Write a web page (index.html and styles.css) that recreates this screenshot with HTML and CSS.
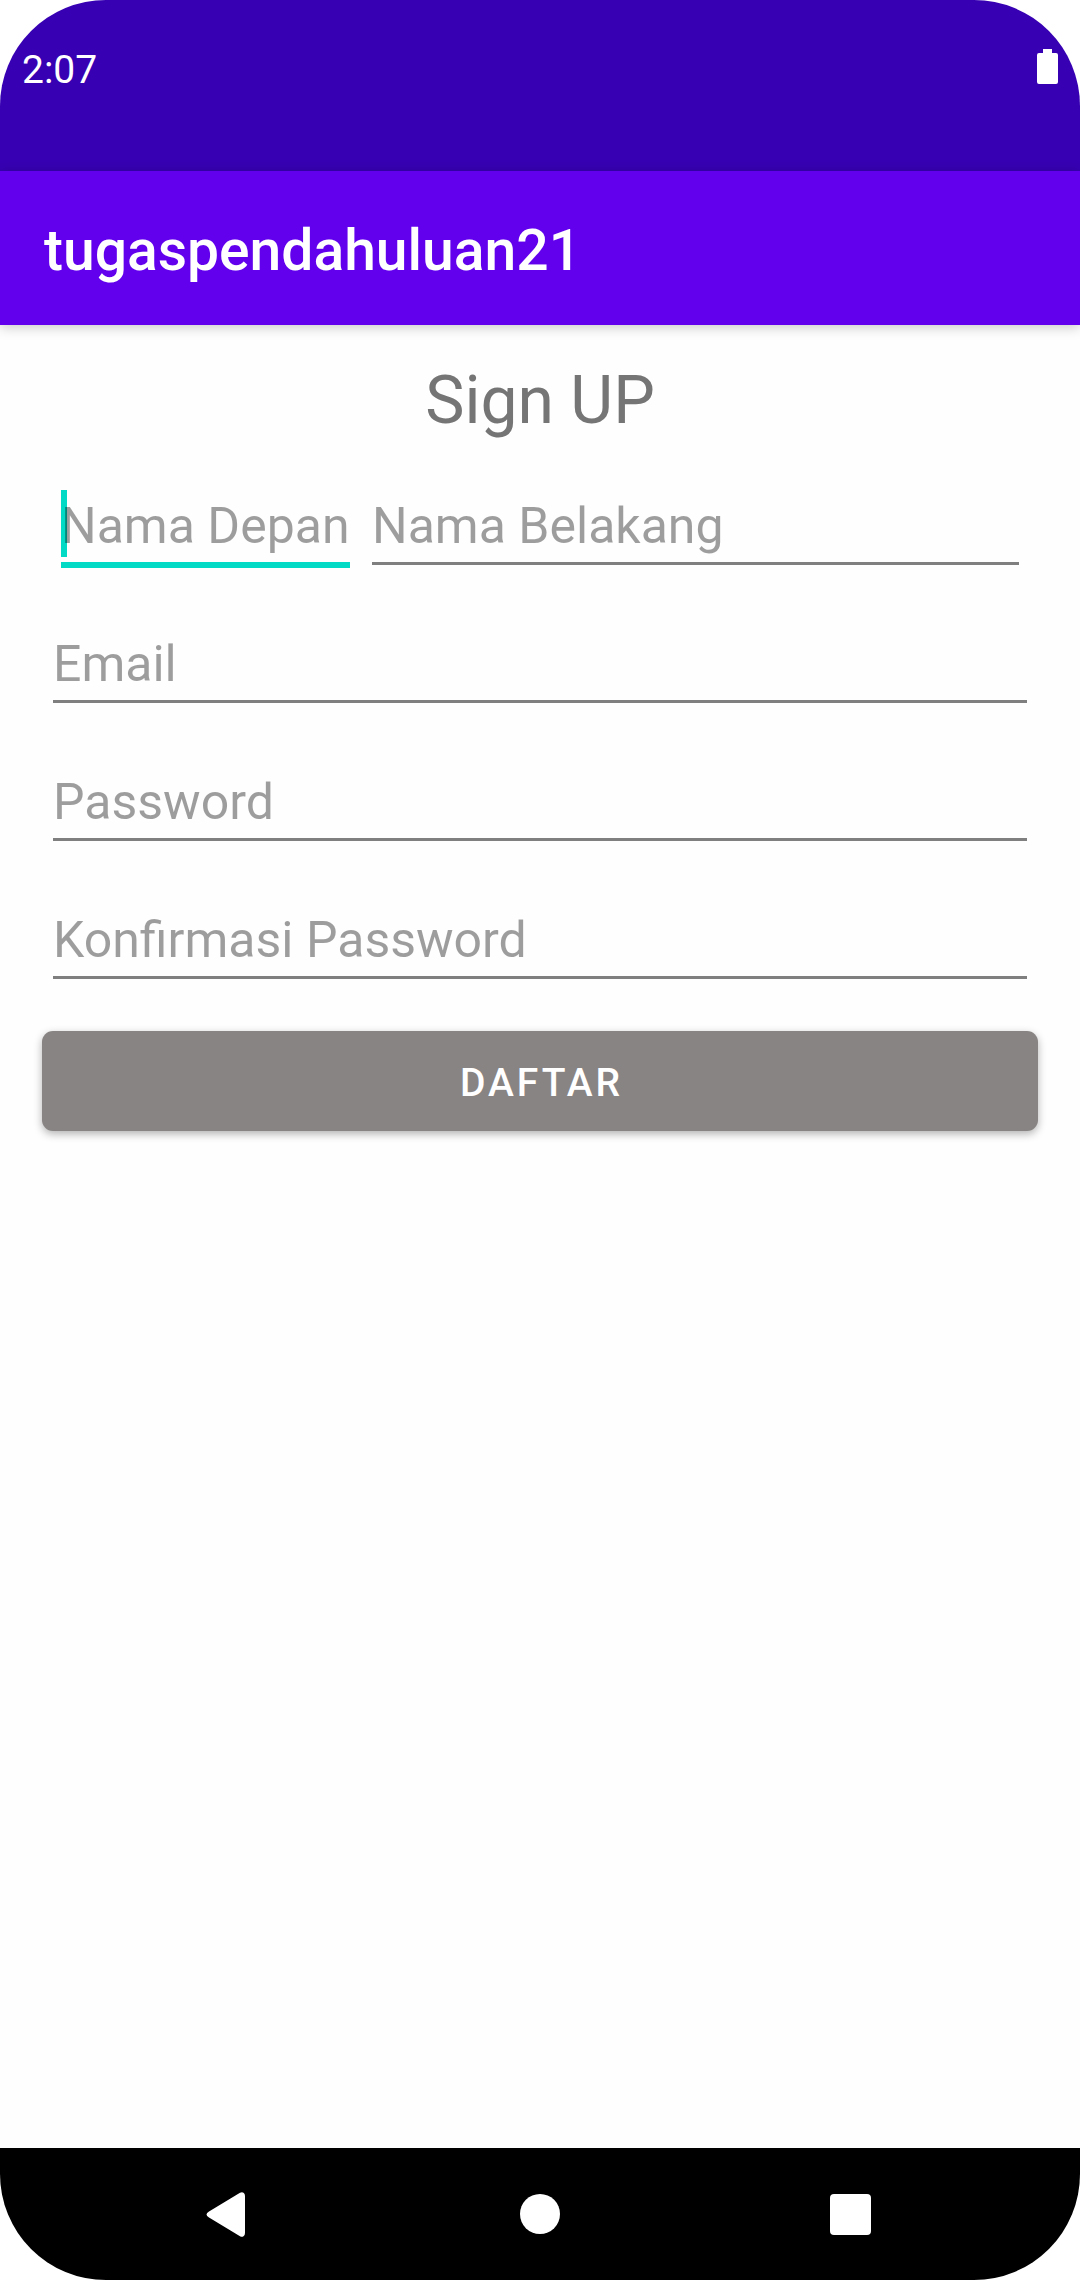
FILE: index.html
```html
<!DOCTYPE html>
<html lang="id">
<head>
<meta charset="utf-8">
<meta name="viewport" content="width=device-width, initial-scale=1">
<title>tugaspendahuluan21</title>
<link rel="stylesheet" href="styles.css">
</head>
<body>
<div class="screen">
  <div class="status-bar">
    <time class="clock">2:07</time>
    <svg class="battery" viewBox="0 0 21 36" role="img" aria-label="Baterai">
      <path fill="#fff" d="M6 0h9v4h4a2 2 0 0 1 2 2v27a2 2 0 0 1-2 2H2a2 2 0 0 1-2-2V6a2 2 0 0 1 2-2h4z"/>
    </svg>
  </div>
  <header class="app-bar">
    <h1 class="app-title">tugaspendahuluan21</h1>
  </header>
  <main class="content">
    <h2 class="form-title">Sign UP</h2>
    <form class="form">
      <div class="name-row">
        <input class="field field-active" type="text" placeholder="Nama Depan" aria-label="Nama Depan">
        <input class="field" type="text" placeholder="Nama Belakang" aria-label="Nama Belakang">
      </div>
      <input class="field" type="email" placeholder="Email" aria-label="Email">
      <input class="field" type="password" placeholder="Password" aria-label="Password">
      <input class="field" type="password" placeholder="Konfirmasi Password" aria-label="Konfirmasi Password">
      <button class="submit" type="button">DAFTAR</button>
    </form>
  </main>
  <nav class="nav-bar" aria-label="Navigasi">
    <button class="nav-button" type="button" aria-label="Kembali">
      <svg class="nav-icon" viewBox="0 0 48 48"><path d="M3 27.500 34 46.200Q36 47.200 37.500 46.200Q39 45.500 39 43V6Q39 3.500 37.500 2.700Q36 1.800 34 2.800L3 21.500Q-2 24.500 3 27.500z" fill="#fff"/></svg>
    </button>
    <button class="nav-button" type="button" aria-label="Beranda">
      <svg class="nav-icon" viewBox="0 0 48 48"><circle cx="24" cy="24" r="20" fill="#fff"/></svg>
    </button>
    <button class="nav-button" type="button" aria-label="Aplikasi terbaru">
      <svg class="nav-icon" viewBox="0 0 48 48"><rect x="4" y="4" width="41" height="41" rx="4" fill="#fff"/></svg>
    </button>
  </nav>
</div>
</body>
</html>
```
FILE: styles.css
```css
* {
  box-sizing: border-box;
}

body {
  margin: 0;
  background: #fff;
  font-family: Roboto, "Noto Sans", sans-serif;
}

.screen {
  display: flex;
  flex-direction: column;
  min-height: 100vh;
  border-radius: 106px;
  overflow: hidden;
  background: #fefefe;
}

.status-bar {
  display: flex;
  justify-content: space-between;
  align-items: flex-start;
  height: 171px;
  padding: 49px 22px 0;
  background: #3700b3;
}

.clock {
  color: #fff;
  font-size: 39px;
  line-height: 42px;
}

.battery {
  width: 21px;
  height: 36px;
}

.app-bar {
  display: flex;
  align-items: center;
  height: 154px;
  padding: 6px 44px 0;
  background: #6200ee;
  box-shadow: 0 2px 12px rgba(0, 0, 0, 0.22);
}

.app-title {
  margin: 0;
  color: #fff;
  font-size: 57px;
  font-weight: 500;
  line-height: 64px;
}

.content {
  flex: 1;
  padding: 36px 42px;
}

.form-title {
  margin: 0 0 49px;
  color: #757575;
  font-size: 66px;
  font-weight: 400;
  line-height: 80px;
  text-align: center;
}

.form {
  display: flex;
  flex-direction: column;
  gap: 63px;
  padding: 0 11px;
}

.name-row {
  display: flex;
  gap: 22px;
  padding: 0 8px;
}

.field {
  flex: 1 0 auto;
  min-width: 0;
  height: 75px;
  padding: 0;
  border: 0;
  border-bottom: 3px solid #7f7f7f;
  border-radius: 0;
  outline: 0;
  background: transparent;
  color: #212121;
  font: 400 50px/72px Roboto, "Noto Sans", sans-serif;
}

.field::placeholder {
  color: rgba(0, 0, 0, 0.38);
  opacity: 1;
}

.field-active {
  flex: 0 0 289px;
  border-bottom-color: #03dac5;
  box-shadow: 0 3px #03dac5;
  background: linear-gradient(#03dac5, #03dac5) left top / 6px 67px no-repeat;
}

.submit {
  height: 100px;
  margin: -11px -11px 0;
  padding: 3px 0 0 3px;
  border: 0;
  border-radius: 11px;
  background: #888483;
  box-shadow: 0 3px 8px rgba(0, 0, 0, 0.3);
  color: #fff;
  font: 500 39px/44px Roboto, "Noto Sans", sans-serif;
  letter-spacing: 3px;
}

.nav-bar {
  display: flex;
  justify-content: center;
  align-items: center;
  gap: 110px;
  height: 132px;
  background: #000;
}

.nav-button {
  display: flex;
  justify-content: center;
  width: 200px;
  padding: 0;
  border: 0;
  background: none;
}

.nav-icon {
  width: 48px;
  height: 48px;
}
```
